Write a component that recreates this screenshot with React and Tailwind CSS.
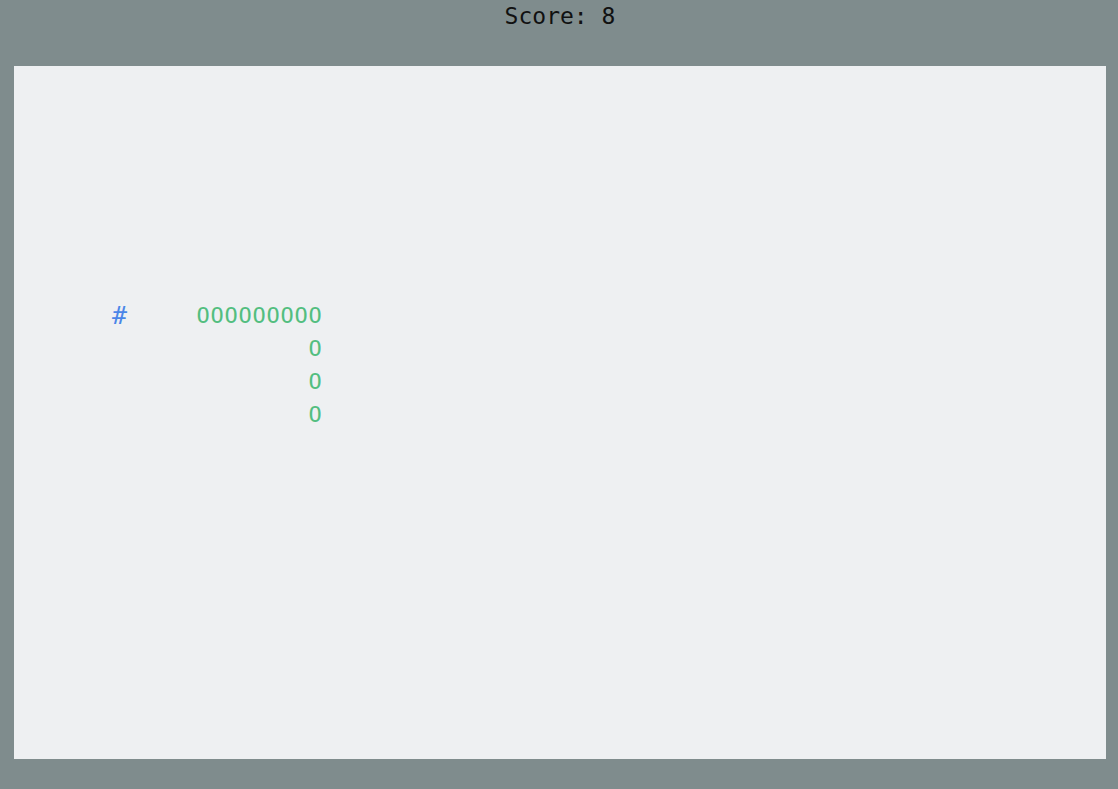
import React from "react";

const COLS = 78;
const ROWS = 21;

function buildGrid() {
  const g = Array.from({ length: ROWS }, () => Array(COLS).fill(" "));
  g[7][7] = "#";
  for (let c = 13; c <= 21; c++) g[7][c] = "O";
  g[8][21] = "O";
  g[9][21] = "O";
  g[10][21] = "O";
  return g;
}

export default function App() {
  const grid = buildGrid();
  return (
    <div
      className="w-[1118px] h-[789px] bg-[#7f8c8d] flex flex-col"
      style={{ fontFamily: '"DejaVu Sans Mono", "Liberation Mono", monospace' }}
    >
      <div className="h-[33px] leading-[33px] text-[23px] text-[#111111] text-center pl-[2px]">Score: 8</div>
      <div className="mt-[33px] ml-[14px] w-[1092px] h-[693px] bg-[#eef0f2] flex flex-col overflow-hidden">
        {grid.map((row, r) => (
          <div key={r} className="flex h-[33px]">
            {row.map((ch, c) => (
              <span
                key={c}
                className={
                  "w-[14px] h-[33px] leading-[37px] text-center shrink-0 " +
                  (ch === "#" ? "text-[25px] text-[#4a86e8]" : "text-[22px] text-[#52be80]")
                }
              >
                {ch === " " ? "\u00a0" : ch}
              </span>
            ))}
          </div>
        ))}
      </div>
    </div>
  );
}
